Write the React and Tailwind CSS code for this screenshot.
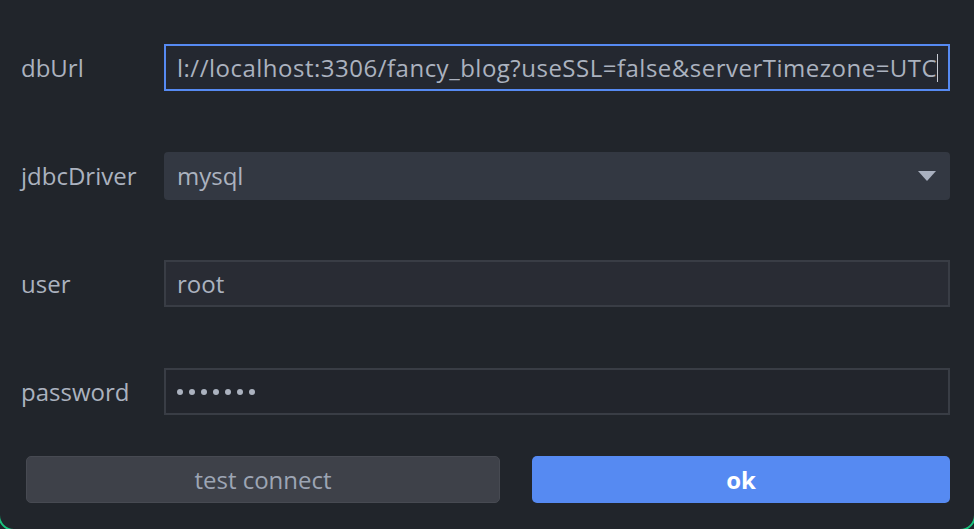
import React from 'react';

const font = { fontFamily: '"Open Sans", "Noto Sans", sans-serif' };

function Label({ children }) {
  return <div className="w-[164px] shrink-0 pl-[21px] pt-[1px] text-[24px] text-[#abb2bf]">{children}</div>;
}

function Row({ label, children }) {
  return (
    <div className="flex items-center h-[47px]">
      <Label>{label}</Label>
      <div className="w-[786px]">{children}</div>
    </div>
  );
}

export default function App() {
  return (
    <div className="w-[974px] h-[529px] overflow-hidden bg-[#21252b]" style={font}>
      <div className="-ml-[2px] -mt-[3px] w-[978px] h-[534px] border-2 border-[#19c37d] rounded-b-[16px] bg-[#21252b] flex flex-col pt-[45px]">
        <div className="flex flex-col gap-[61px]">
          <Row label="dbUrl">
            <div className="h-[47px] border-2 border-[#568af2] bg-[#242830] flex items-center pl-[11px] pr-[10px]">
              <div className="flex-1 overflow-hidden flex items-center whitespace-nowrap text-[24px] tracking-[0.5px] text-[#abb2bf]">
                <span className="shrink-0">l://localhost:3306/fancy_blog?useSSL=false&amp;serverTimezone=UTC</span>
                <span className="shrink-0 inline-block w-[2px] h-[28px] bg-[#c8ccd4]"></span>
              </div>
            </div>
          </Row>
          <Row label="jdbcDriver">
            <div className="h-[48px] rounded-[4px] bg-[#333842] flex items-center justify-between pl-[13px] pr-[14px]">
              <span className="text-[24px] text-[#abb2bf]">mysql</span>
              <svg width="18" height="10" viewBox="0 0 18 10">
                <path d="M0 0 L18 0 L9 10 Z" fill="#a9b0bf" />
              </svg>
            </div>
          </Row>
          <Row label="user">
            <div className="h-[47px] border-2 border-[#393d45] bg-[#292c34] flex items-center pl-[11px]">
              <span className="text-[24px] text-[#abb2bf]">root</span>
            </div>
          </Row>
          <Row label="password">
            <div className="h-[47px] border-2 border-[#393d45] bg-[#22252c] flex items-center pl-[11px] gap-[6px]">
              {[0, 1, 2, 3, 4, 5, 6].map((i) => (
                <span key={i} className="w-[6px] h-[6px] rounded-full bg-[#abb2bf]"></span>
              ))}
            </div>
          </Row>
        </div>
        <div className="flex gap-[32px] mt-[41px] pl-[26px]">
          <button className="w-[474px] h-[47px] rounded-[5px] bg-[#3e4149] border border-[#474a52] text-[24px] text-[#9da5b4]">
            test connect
          </button>
          <button className="w-[418px] h-[47px] rounded-[5px] bg-[#568af2] text-[24px] font-bold text-white">
            ok
          </button>
        </div>
      </div>
    </div>
  );
}
